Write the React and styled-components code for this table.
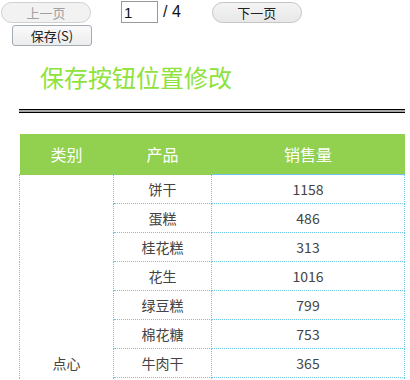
import React from 'react';
import styled, {createGlobalStyle} from 'styled-components';

const GlobalStyle = createGlobalStyle`
  html, body {
    margin: 0;
    padding: 0;
    overflow: hidden;
    background: #fff;
  }
  body {
    font-family: "Noto Sans CJK SC", "Noto Sans", sans-serif;
    color: #333;
  }
`

const rows = [
    {name: '饼干', sales: 1158},
    {name: '蛋糕', sales: 486},
    {name: '桂花糕', sales: 313},
    {name: '花生', sales: 1016},
    {name: '绿豆糕', sales: 799},
    {name: '棉花糖', sales: 753},
    {name: '牛肉干', sales: 365},
    {name: '瓜子', sales: 902},
    {name: '薯片', sales: 641},
    {name: '巧克力', sales: 528},
    {name: '果冻', sales: 417},
    {name: '话梅', sales: 286},
    {name: '麻花', sales: 359},
];

const App = () => {
    return (
        <Page>
            <GlobalStyle/>
            <Pager>
                <PillButton disabled>上一页</PillButton>
                <PageInput defaultValue="1"/>
                <PageTotal>/ 4</PageTotal>
                <PillButton next>下一页</PillButton>
            </Pager>
            <SaveButton>保存(S)</SaveButton>
            <Content>
                <Title>保存按钮位置修改</Title>
                <Rule/>
                <Table>
                    <colgroup>
                        <col style={{width: 94}}/>
                        <col style={{width: 98}}/>
                        <col/>
                    </colgroup>
                    <thead>
                    <tr>
                        <Th>类别</Th>
                        <Th>产品</Th>
                        <Th>销售量</Th>
                    </tr>
                    </thead>
                    <tbody>
                    {rows.map((row, i) => (
                        <tr key={row.name}>
                            {i === 0 && <Td rowSpan={rows.length}>点心</Td>}
                            <Td>{row.name}</Td>
                            <Td>{row.sales}</Td>
                        </tr>
                    ))}
                    </tbody>
                </Table>
            </Content>
        </Page>
    );
};

export default App;

const Page = styled.div`
  width: 410px;
`

const Pager = styled.div`
  display: flex;
  align-items: flex-start;
  height: 24px;
`

const PillButton = styled.button`
  box-sizing: border-box;
  width: 90px;
  height: 21px;
  margin: 2px 0 0 ${p => p.next ? '31px' : '1px'};
  padding: 0;
  border: 1px solid ${p => p.disabled ? '#d0d0d0' : '#c4c4c4'};
  border-radius: 11px;
  background: ${p => p.disabled ? '#f2f2f2' : 'linear-gradient(#f4f4f4, #e8e8e8)'};
  color: ${p => p.disabled ? '#a0a0a0' : '#222'};
  font-family: "Noto Sans CJK SC", sans-serif;
  font-size: 13px;
  line-height: 19px;
`

const PageInput = styled.input`
  box-sizing: border-box;
  width: 37px;
  height: 22px;
  margin: 1px 0 0 30px;
  padding: 0 2px;
  border: 1px solid #999;
  font-family: "Liberation Sans", Arial, sans-serif;
  font-size: 15px;
  color: #111;
  outline: none;
`

const PageTotal = styled.span`
  margin: 2px 0 0 5px;
  font-family: "Liberation Sans", Arial, sans-serif;
  font-size: 16px;
  line-height: 20px;
  color: #111;
`

const SaveButton = styled.button`
  display: block;
  box-sizing: border-box;
  width: 80px;
  height: 21px;
  margin: 1px 0 0 12px;
  padding: 0;
  border: 1px solid #a4abb3;
  border-radius: 3px;
  background: linear-gradient(#fafafa, #ececec);
  color: #222;
  font-family: "Noto Sans CJK SC", sans-serif;
  font-size: 13px;
  line-height: 19px;
`

const Content = styled.div`
  width: 386px;
  margin-left: 19px;
`

const Title = styled.h1`
  margin: 16px 0 0 21px;
  font-size: 24px;
  font-weight: normal;
  line-height: 30px;
  color: #8ee23c;
`

const Rule = styled.div`
  height: 2px;
  margin-top: 17px;
  background: #a8a8a8;
  border-top: 1px solid #000;
  border-bottom: 1px solid #000;
`

const Table = styled.table`
  width: 386px;
  margin-top: 21px;
  border-collapse: collapse;
  table-layout: fixed;
`

const Th = styled.th`
  height: 40px;
  padding: 0;
  background: #92d050;
  color: #fff;
  font-size: 16px;
  font-weight: normal;
  text-align: center;
`

const Td = styled.td`
  height: 28px;
  padding: 0;
  border: 1px dotted #6cc8e4;
  font-size: 14px;
  color: #444;
  text-align: center;
  vertical-align: middle;
`
